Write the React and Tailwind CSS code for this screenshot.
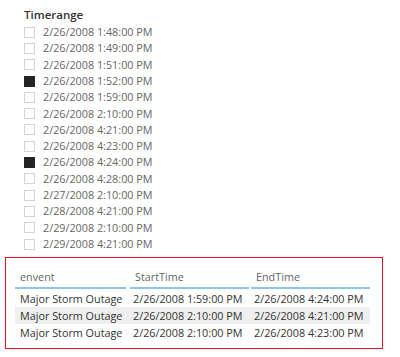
const times = [
  { label: '2/26/2008 1:48:00 PM', checked: false },
  { label: '2/26/2008 1:49:00 PM', checked: false },
  { label: '2/26/2008 1:51:00 PM', checked: false },
  { label: '2/26/2008 1:52:00 PM', checked: true },
  { label: '2/26/2008 1:59:00 PM', checked: false },
  { label: '2/26/2008 2:10:00 PM', checked: false },
  { label: '2/26/2008 4:21:00 PM', checked: false },
  { label: '2/26/2008 4:23:00 PM', checked: false },
  { label: '2/26/2008 4:24:00 PM', checked: true },
  { label: '2/26/2008 4:28:00 PM', checked: false },
  { label: '2/27/2008 2:10:00 PM', checked: false },
  { label: '2/28/2008 4:21:00 PM', checked: false },
  { label: '2/29/2008 2:10:00 PM', checked: false },
  { label: '2/29/2008 4:21:00 PM', checked: false },
]

const rows = [
  ['Major Storm Outage', '2/26/2008 1:59:00 PM', '2/26/2008 4:24:00 PM'],
  ['Major Storm Outage', '2/26/2008 2:10:00 PM', '2/26/2008 4:21:00 PM'],
  ['Major Storm Outage', '2/26/2008 2:10:00 PM', '2/26/2008 4:23:00 PM'],
]

function Slicer() {
  return (
    <div className="pl-6 pt-[6px]">
      <div className="text-[11.5px] leading-[18px] font-semibold text-[#333333]">Timerange</div>
      <div className="flex flex-col">
        {times.map((t, i) => (
          <div key={i} className="flex items-center h-[16.3px]">
            <span
              className={
                t.checked
                  ? 'w-[11px] h-[11px] bg-[#252423] border border-[#252423]'
                  : 'w-[11px] h-[11px] bg-white border border-[#d4d4d4]'
              }
            />
            <span className="ml-2 text-[10.8px] text-[#666666] whitespace-nowrap">{t.label}</span>
          </div>
        ))}
      </div>
    </div>
  )
}

function EventTable() {
  return (
    <div className="ml-[5px] mt-[5px] w-[378px] h-[92px] border-[1.5px] border-[#e81123] pt-[8px] pl-[9px]">
      <div className="grid grid-cols-[113px_121px_121px] w-[355px]">
        {['envent', 'StartTime', 'EndTime'].map((h, i) => (
          <div key={h} className={i === 0 ? 'pr-[2px]' : 'pl-[2px]'}>
            <div className="h-[21px] pl-[5px] text-[10.8px] text-[#666666] flex items-center">{h}</div>
            <div className="h-[2px] bg-[#8cc5f2]" />
          </div>
        ))}
      </div>
      <div className="w-[355px] mt-[1px]">
        {rows.map((r, i) => (
          <div
            key={i}
            className={
              i === 1
                ? 'grid grid-cols-[113px_121px_121px] h-[17px] bg-[#efefef] items-center'
                : 'grid grid-cols-[113px_121px_121px] h-[17px] items-center'
            }
          >
            {r.map((c, j) => (
              <div key={j} className="pl-[5px] text-[10.8px] text-[#333333] whitespace-nowrap">{c}</div>
            ))}
          </div>
        ))}
      </div>
    </div>
  )
}

export default function App() {
  return (
    <div
      className="w-[400px] h-[357px] bg-white overflow-hidden"
      style={{ fontFamily: '"Open Sans", "Noto Sans", sans-serif' }}
    >
      <Slicer />
      <EventTable />
    </div>
  )
}
